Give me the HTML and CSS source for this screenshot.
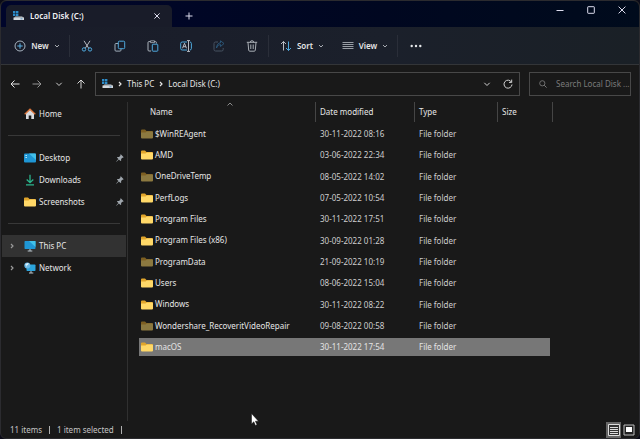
FILE: index.html
```
<!DOCTYPE html>
<html lang="en">
<head>
<meta charset="utf-8">
<title>Local Disk (C:)</title>
<link rel="stylesheet" href="styles.css">
</head>
<body>
<svg class="defs" aria-hidden="true">
  <symbol id="folder" viewBox="0 0 12 10"><path d="M0 1.5Q0 .5 1 .5h3l1.5 1.5H11q1 0 1 1V6H0z" fill="#e0a52c"/><path d="M0 3.5h4.5L6 2.5h5q1 0 1 1v5q0 1-1 1H1q-1 0-1-1z" fill="#ffd868"/></symbol>
  <symbol id="drive" viewBox="0 0 12 10"><path d="M1 0h2.4v2.2H1zM4 0h2.4v2.2H4zM1 2.8h2.4V5H1zM4 2.8h2.4V5H4z" fill="#2d8bc8"/><path d="M3.500 5.2h6.500L12 7H2z" fill="#8d969e"/><path d="M1.500 6.5H12V9H1.500z" fill="#d4d8dc"/><path d="M8.5 7.5h2v.8h-2z" fill="#317ebc"/></symbol>
  <symbol id="down" viewBox="0 0 6 6"><path d="M1 2l2 2 2-2" fill="none" stroke="currentColor"/></symbol>
  <symbol id="right" viewBox="0 0 6 8"><path d="M2 2L4 4 2 6" fill="none" stroke="currentColor" stroke-width="1.2"/></symbol>
  <symbol id="pin" viewBox="0 0 8 8"><path d="M4.8.3l2.9 2.9-.8.6-.5-.1-1.3 1.4.1 1.4-.7.6-1.6-1.6L.5 7.8l-.3-.3 2.2-2.4L.9 3.6l.7-.7 1.4.1L4.4 1.7 4.2 1z" fill="#9fa6ad"/></symbol>
</svg>

<header class="titlebar">
  <div class="tab">
    <svg class="i12" viewBox="0 0 12 10"><use href="#drive"/></svg>
    <span class="tab-name">Local Disk (C:)</span>
    <button class="tab-close" aria-label="Close tab"><svg width="6" height="6" viewBox="0 0 6 6"><path d="M.4.4l5.2 5.2M5.6.4L.4 5.6" stroke="#dde"/></svg></button>
  </div>
  <button class="new-tab" aria-label="New tab"><svg width="8" height="8" viewBox="0 0 8 8"><path d="M4 .5v7M.5 4h7" stroke="#dde"/></svg></button>
  <div class="window-buttons">
    <button aria-label="Minimize"><svg width="8" height="8" viewBox="0 0 8 8"><path d="M.5 4.5h7" stroke="#dde"/></svg></button>
    <button aria-label="Maximize"><svg width="8" height="8" viewBox="0 0 8 8"><rect x=".7" y=".7" width="6.6" height="6.6" rx=".5" fill="none" stroke="#dde"/></svg></button>
    <button aria-label="Close"><svg width="8" height="8" viewBox="0 0 8 8"><path d="M.6.6l6.8 6.8M7.4.6L.6 7.4" stroke="#dde"/></svg></button>
  </div>
</header>

<div class="toolbar">
  <button class="tool new">
    <svg width="12" height="12" viewBox="0 0 12 12" fill="none"><circle cx="6" cy="6" r="5" stroke="#b8c4d0" stroke-width=".9"/><path d="M6 3.3v5.4M3.3 6h5.4" stroke="#5cb4e8"/></svg>
    New <svg class="chev" viewBox="0 0 6 6"><use href="#down"/></svg>
  </button>
  <span class="divider"></span>
  <button class="icon-tool" aria-label="Cut"><svg width="12" height="12" viewBox="0 0 12 12" fill="none"><path d="M3 .8l4.8 7.6M9 .8L4.2 8.4" stroke="#c8ccd2" stroke-width=".9"/><circle cx="3" cy="9.4" r="1.7" stroke="#4fa9dd"/><circle cx="9" cy="9.4" r="1.7" stroke="#4fa9dd"/></svg></button>
  <button class="icon-tool" aria-label="Copy"><svg width="12" height="12" viewBox="0 0 12 12" fill="none"><path d="M4.2 3.5H2q-1 0-1 1v5.6q0 1 1 1h4q1 0 1-1V9" stroke="#9eacb8"/><rect x="4.3" y="1.2" width="6.4" height="7.5" rx="1" stroke="#4fa9dd"/></svg></button>
  <button class="icon-tool" aria-label="Paste"><svg width="12" height="12" viewBox="0 0 12 12" fill="none"><path d="M4 11H2q-1 0-1-1V2.6q0-1 1-1h1.3M7.4 1.6h1q1 0 1 1V3.5" stroke="#aab2bb"/><path d="M3.5.8h4v1.8h-4z" stroke="#aab2bb" stroke-width=".8"/><rect x="5.3" y="4.2" width="5.5" height="7" rx=".7" stroke="#4fa9dd"/></svg></button>
  <button class="icon-tool" aria-label="Rename"><svg width="12" height="12" viewBox="0 0 12 12" fill="none"><path d="M7 10H2.2q-1.5 0-1.5-1.500V3.500Q.7 2 2.200 2H7M10 2q1.400.2 1.400 1.500v5q0 1.300-1.400 1.500" stroke="#4fa9dd"/><path d="M7 .6h3M8.500.6v10.800M7 11.400h3" stroke="#c8ccd2" stroke-width=".9"/><path d="M2.500 8.300l2-5 2 5M3.200 6.700h2.600" stroke="#c8ccd2" stroke-width=".9"/></svg></button>
  <button class="icon-tool" aria-label="Share" disabled><svg width="12" height="12" viewBox="0 0 12 12" fill="none"><path d="M5 2H2.500q-1.500 0-1.500 1.500v6Q1 11 2.500 11h6.200q1.500 0 1.500-1.500V8" stroke="#465260"/><path d="M3.500 8q.5-3.500 4-3.500V6.500L11 3.500 7.500.8v2Q4 3 3.500 8z" stroke="#2f6188" stroke-width=".8"/></svg></button>
  <button class="icon-tool" aria-label="Delete"><svg width="12" height="12" viewBox="0 0 12 12" fill="none" stroke="#b9bec4"><path d="M.8 2.300h10.400M4.300 2.300q0-1.600 1.700-1.600t1.700 1.600M2 2.500l.7 7.700q.1 1 1.100 1h4.400q1 0 1.100-1L10 2.500M4.800 4.500v4.500M7.200 4.500v4.500" stroke-width=".9"/></svg></button>
  <span class="divider"></span>
  <button class="tool sort">
    <svg width="12" height="12" viewBox="0 0 12 12" fill="none"><path d="M3.500 10.500v-9M1 4l2.500-2.500L6 4" stroke="#c8ccd2" stroke-width=".9"/><path d="M8.500 1.500v9M6 8l2.500 2.500L11 8" stroke="#4fa9dd"/></svg>
    Sort <svg class="chev" viewBox="0 0 6 6"><use href="#down"/></svg>
  </button>
  <button class="tool view">
    <svg width="12" height="12" viewBox="0 0 12 12"><path d="M.5 2.500h11M.5 4.500h11M.5 6.500h11M.5 8.500h11" stroke="#b9bec4" stroke-width=".8"/></svg>
    View <svg class="chev" viewBox="0 0 6 6"><use href="#down"/></svg>
  </button>
  <span class="divider"></span>
  <button class="more" aria-label="See more"><svg width="12" height="4" viewBox="0 0 12 4" fill="#e6e8ea"><circle cx="1.700" cy="2" r="1.200"/><circle cx="6" cy="2" r="1.200"/><circle cx="10.300" cy="2" r="1.200"/></svg></button>
</div>

<div class="addressbar">
  <div class="history">
    <button aria-label="Back"><svg width="10" height="10" viewBox="0 0 10 10" fill="none" stroke="#e4e4e4"><path d="M9.500 5H1M4.500 1.500L1 5l3.500 3.500"/></svg></button>
    <button aria-label="Forward"><svg width="10" height="10" viewBox="0 0 10 10" fill="none" stroke="#959595"><path d="M.5 5H9M5.500 1.500L9 5 5.500 8.500"/></svg></button>
    <button aria-label="Recent locations"><svg width="10" height="10" viewBox="0 0 10 10" fill="none" stroke="#d0d0d0"><path d="M2.300 3.800L5 6.500l2.700-2.700"/></svg></button>
    <button aria-label="Up"><svg width="10" height="10" viewBox="0 0 10 10" fill="none" stroke="#d8d8d8"><path d="M5 9.500V1M1.500 4.500L5 1l3.500 3.500"/></svg></button>
  </div>
  <nav class="path" aria-label="Path">
    <svg class="i12" viewBox="0 0 12 10"><use href="#drive"/></svg>
    <svg class="sep" viewBox="0 0 6 8"><use href="#right"/></svg>
    <a href="#">This PC</a>
    <svg class="sep" viewBox="0 0 6 8"><use href="#right"/></svg>
    <a href="#">Local Disk (C:)</a>
    <button class="path-drop" aria-label="Previous locations"><svg width="10" height="10" viewBox="0 0 10 10" fill="none" stroke="#d0d0d0"><path d="M2.300 3.800L5 6.500l2.700-2.700"/></svg></button>
    <button class="refresh" aria-label="Refresh"><svg width="10" height="10" viewBox="0 0 10 10" fill="none" stroke="#d0d0d0"><path d="M8.500 3.200A4 4 0 1 0 9 5.500M8.700.6v2.800H6"/></svg></button>
  </nav>
  <label class="search">
    <svg width="8" height="8" viewBox="0 0 8 8" fill="none" stroke="#777"><circle cx="3.300" cy="3.300" r="2.600" stroke-width=".9"/><path d="M5.200 5.200l2.400 2.400"/></svg>
    <input type="text" placeholder="Search Local Disk ..." aria-label="Search Local Disk (C:)">
  </label>
</div>

<div class="body">
  <nav class="sidebar" aria-label="Folders">
    <a href="#"><span class="expand"></span><svg class="i12" viewBox="0 0 12 12"><path d="M2 5l4-3.500L10 5v6H7.300V7.500H4.700V11H2z" fill="#d8dade"/><path d="M.7 6.200L6 1.200l5.300 5" fill="none" stroke="#d8733a" stroke-width="1.400"/></svg>Home</a>
    <hr>
    <a href="#"><span class="expand"></span><svg class="i12" viewBox="0 0 12 12"><rect y="1.500" width="12" height="9" rx="1" fill="#1f96d4"/><path d="M5 1.500h6q1 0 1 1V8z" fill="#42bfe8"/><path d="M1.500 3.500h1.300M1.500 5.500h1.300" stroke="#d8f4ff"/></svg>Desktop<svg class="pin" viewBox="0 0 8 8"><use href="#pin"/></svg></a>
    <a href="#"><span class="expand"></span><svg class="i12" viewBox="0 0 12 12"><path d="M6 .8v7.700M2.700 5.500L6 8.700l3.300-3.200M2 10.800h8" fill="none" stroke="#2bb58d" stroke-width="1.300"/></svg>Downloads<svg class="pin" viewBox="0 0 8 8"><use href="#pin"/></svg></a>
    <a href="#"><span class="expand"></span><svg class="i12" viewBox="0 0 12 10"><use href="#folder"/></svg>Screenshots<svg class="pin" viewBox="0 0 8 8"><use href="#pin"/></svg></a>
    <hr>
    <a href="#" class="current"><span class="expand"><svg class="sep" viewBox="0 0 6 8"><use href="#right"/></svg></span><svg class="i12" viewBox="0 0 12 12"><rect x=".5" y="1" width="11" height="8" rx=".8" fill="#1f96d4"/><path d="M5 1h6.500v6z" fill="#42c2ea"/><path d="M6 9v2M3.700 11h4.600" stroke="#b8c4cc"/></svg>This PC</a>
    <a href="#"><span class="expand"><svg class="sep" viewBox="0 0 6 8"><use href="#right"/></svg></span><svg class="i12" viewBox="0 0 12 12"><rect x="2.500" y="2.500" width="9" height="6.500" rx=".8" fill="#2ba4dc"/><path d="M7 9v2M5 11h4.300" stroke="#b8c4cc"/><circle cx="3.300" cy="3.600" r="3" fill="#69b9e6"/><path d="M1.200 2.500q2-2.200 3.600-1.300L4 3 2.500 3.500l.5 2z" fill="#dceffb"/></svg>Network</a>
  </nav>

  <main class="files">
    <table>
      <colgroup><col class="c-name"><col class="c-date"><col class="c-type"><col class="c-size"></colgroup>
      <thead><tr><th><span>Name</span><svg class="sorted" viewBox="0 0 6 4"><path d="M.5 3.500L3 1l2.500 2.500" fill="none" stroke="#999" stroke-width=".9"/></svg></th><th>Date modified</th><th>Type</th><th>Size</th></tr></thead>
      <tbody>
        <tr class="hidden-item"><td><svg class="i12" viewBox="0 0 12 10"><use href="#folder"/></svg>$WinREAgent</td><td>30-11-2022 08:16</td><td>File folder</td><td></td></tr>
        <tr><td><svg class="i12" viewBox="0 0 12 10"><use href="#folder"/></svg>AMD</td><td>03-06-2022 22:34</td><td>File folder</td><td></td></tr>
        <tr class="hidden-item"><td><svg class="i12" viewBox="0 0 12 10"><use href="#folder"/></svg>OneDriveTemp</td><td>08-05-2022 14:02</td><td>File folder</td><td></td></tr>
        <tr><td><svg class="i12" viewBox="0 0 12 10"><use href="#folder"/></svg>PerfLogs</td><td>07-05-2022 10:54</td><td>File folder</td><td></td></tr>
        <tr><td><svg class="i12" viewBox="0 0 12 10"><use href="#folder"/></svg>Program Files</td><td>30-11-2022 17:51</td><td>File folder</td><td></td></tr>
        <tr><td><svg class="i12" viewBox="0 0 12 10"><use href="#folder"/></svg>Program Files (x86)</td><td>30-09-2022 01:28</td><td>File folder</td><td></td></tr>
        <tr class="hidden-item"><td><svg class="i12" viewBox="0 0 12 10"><use href="#folder"/></svg>ProgramData</td><td>21-09-2022 10:19</td><td>File folder</td><td></td></tr>
        <tr><td><svg class="i12" viewBox="0 0 12 10"><use href="#folder"/></svg>Users</td><td>08-06-2022 15:04</td><td>File folder</td><td></td></tr>
        <tr><td><svg class="i12" viewBox="0 0 12 10"><use href="#folder"/></svg>Windows</td><td>30-11-2022 08:22</td><td>File folder</td><td></td></tr>
        <tr class="hidden-item"><td><svg class="i12" viewBox="0 0 12 10"><use href="#folder"/></svg>Wondershare_RecoveritVideoRepair</td><td>09-08-2022 00:58</td><td>File folder</td><td></td></tr>
        <tr class="selected"><td><svg class="i12" viewBox="0 0 12 10"><use href="#folder"/></svg>macOS</td><td>30-11-2022 17:54</td><td>File folder</td><td></td></tr>
      </tbody>
    </table>
  </main>
</div>

<footer class="statusbar">
  <span>11 items</span><i></i><span>1 item selected</span><i></i>
  <div class="modes">
    <button class="active" aria-label="Details view"><svg width="12" height="12" viewBox="0 0 12 12"><path d="M.5.5h11v11H.5z" fill="#333" stroke="#ddd"/><path d="M2 3.500h8M2 5.500h8M2 7.500h8M2 9.500h8" stroke="#ddd"/></svg></button>
    <button aria-label="Large icons"><svg width="12" height="12" viewBox="0 0 12 12"><path d="M1 1h10v10H1z" fill="#222" stroke="#bbb"/><path d="M3 3h6v5H3z" fill="#fff"/></svg></button>
  </div>
</footer>
<svg class="cursor" viewBox="0 0 8 13" aria-hidden="true"><path d="M.5.5v10.500l2.300-2.200 1.600 3.700 1.600-.7-1.600-3.600h3.100z" fill="#fff" stroke="#111" stroke-width=".5"/></svg>
</body>
</html>
```
FILE: styles.css
```
* { box-sizing: border-box; }
body {
  margin: 0;
  min-height: 100vh;
  display: flex;
  flex-direction: column;
  position: relative;
  background: #191919;
  border: 1px solid #2b2b2f;
  border-radius: 6px;
  color: #e6e6e6;
  font: 8px/12px "Noto Sans", "Open Sans", sans-serif;
}
html { background: #0b0b18; }
svg { display: block; flex: none; }
.defs { position: absolute; width: 0; height: 0; }
a { color: inherit; text-decoration: none; }
button {
  display: flex;
  align-items: center;
  justify-content: center;
  padding: 0;
  border: 0;
  background: none;
  color: inherit;
  font: inherit;
}
.i12 { width: 12px; height: 12px; }
.chev { width: 6px; height: 6px; color: #a8acb2; }
.sep { width: 6px; height: 8px; }

.titlebar {
  display: flex;
  align-items: flex-end;
  height: 26px;
  padding-left: 5px;
  background: linear-gradient(90deg, #00052b, #000720 60%, #000b1c);
  border-radius: 6px 6px 0 0;
}
.tab {
  display: flex;
  align-items: center;
  width: 166px;
  height: 22px;
  padding: 0 12px 0 6px;
  gap: 6px;
  background: #191c29;
  border-radius: 5px 5px 0 0;
  color: #f0f0f4;
  font-weight: 600;
}
.tab-close { margin-left: auto; width: 6px; height: 12px; }
.new-tab { width: 34px; height: 22px; }
.window-buttons { display: flex; align-self: flex-start; margin-left: auto; padding-right: 2px; }
.window-buttons button { width: 31px; height: 18px; }

.toolbar {
  display: flex;
  align-items: center;
  height: 38px;
  padding-left: 14px;
  background: linear-gradient(90deg, #191c29, #1b202b 60%, #1a2026);
  border-bottom: 1px solid #333538;
  font-weight: 600;
}
.tool { gap: 5px; }
.divider { width: 1px; height: 22px; background: #2a2e39; }
.new { width: 44px; margin-right: 10px; }
.icon-tool { width: 33px; height: 24px; }
.sort { width: 42px; margin: 0 20px 0 12px; }
.view { width: 44px; margin-right: 10px; }
.more { margin-left: 12px; }

.addressbar { display: flex; align-items: center; height: 37px; padding: 0 8px 0 3px; }
.history { display: flex; width: 91px; }
.history button { width: 22px; height: 22px; }
.path {
  flex: 1;
  display: flex;
  align-items: center;
  gap: 4px;
  height: 24px;
  padding: 0 3px 0 5px;
  border: 1px solid #484848;
}
.path-drop { width: 18px; height: 16px; margin-left: auto; }
.refresh { width: 16px; height: 16px; }
.search {
  display: flex;
  align-items: center;
  gap: 9px;
  width: 102px;
  height: 24px;
  margin-left: 9px;
  padding-left: 9px;
  border: 1px solid #484848;
}
.search input {
  flex: 1;
  min-width: 0;
  padding: 0;
  border: 0;
  background: none;
  color: #ddd;
  font: inherit;
}
.search input::placeholder { color: #7b7b7b; }

.body { flex: 1; display: flex; }
.sidebar { width: 127px; padding: 1px 1px 0; border-right: 1px solid #303030; }
.sidebar a { display: flex; align-items: center; gap: 3px; height: 22px; padding-right: 2px; }
.sidebar hr {
  height: 1px;
  margin: 10px 6px 11px;
  border: 0;
  background: #383838;
}
.expand { width: 19px; padding-left: 7px; color: #999; }
.current { background: #323232; }
.pin { width: 8px; height: 8px; margin-left: auto; }

.files { flex: 1; padding-left: 11px; }
table { table-layout: fixed; width: 414px; border-spacing: 0 3px; margin-top: -3px; }
.c-name { width: 177px; }
.c-date { width: 99px; }
.c-type { width: 83px; }
th {
  height: 20px;
  padding: 0 0 0 4px;
  border-right: 1px solid #454545;
  font-weight: 400;
  text-align: left;
  position: relative;
}
th:first-child { padding-left: 11px; }
.sorted { position: absolute; top: 0; left: 88px; width: 6px; height: 4px; }
td { height: 18px; padding: 0 0 0 4px; color: #cecece; white-space: nowrap; }
td:first-child { padding-left: 2px; color: #e6e6e6; }
td:last-child { border-right: 3px solid transparent; background-clip: padding-box; }
td .i12 { display: inline-block; vertical-align: middle; margin-right: 2px; }
tr:nth-child(3n) td { height: 19px; }
.hidden-item .i12 { opacity: .5; }
.selected td { background-color: #777; color: #e4e4e4; }

.statusbar { display: flex; align-items: center; height: 17px; padding: 0 3px 0 9px; color: #c4c4c4; }
.statusbar i { width: 1px; height: 8px; margin: 0 7px; background: #b0b0b0; }
.modes { display: flex; margin-left: auto; }
.modes button { width: 15px; height: 16px; }
.modes .active { background: #666; }
.cursor { position: absolute; left: 250px; top: 412px; width: 8px; height: 13px; }
```
